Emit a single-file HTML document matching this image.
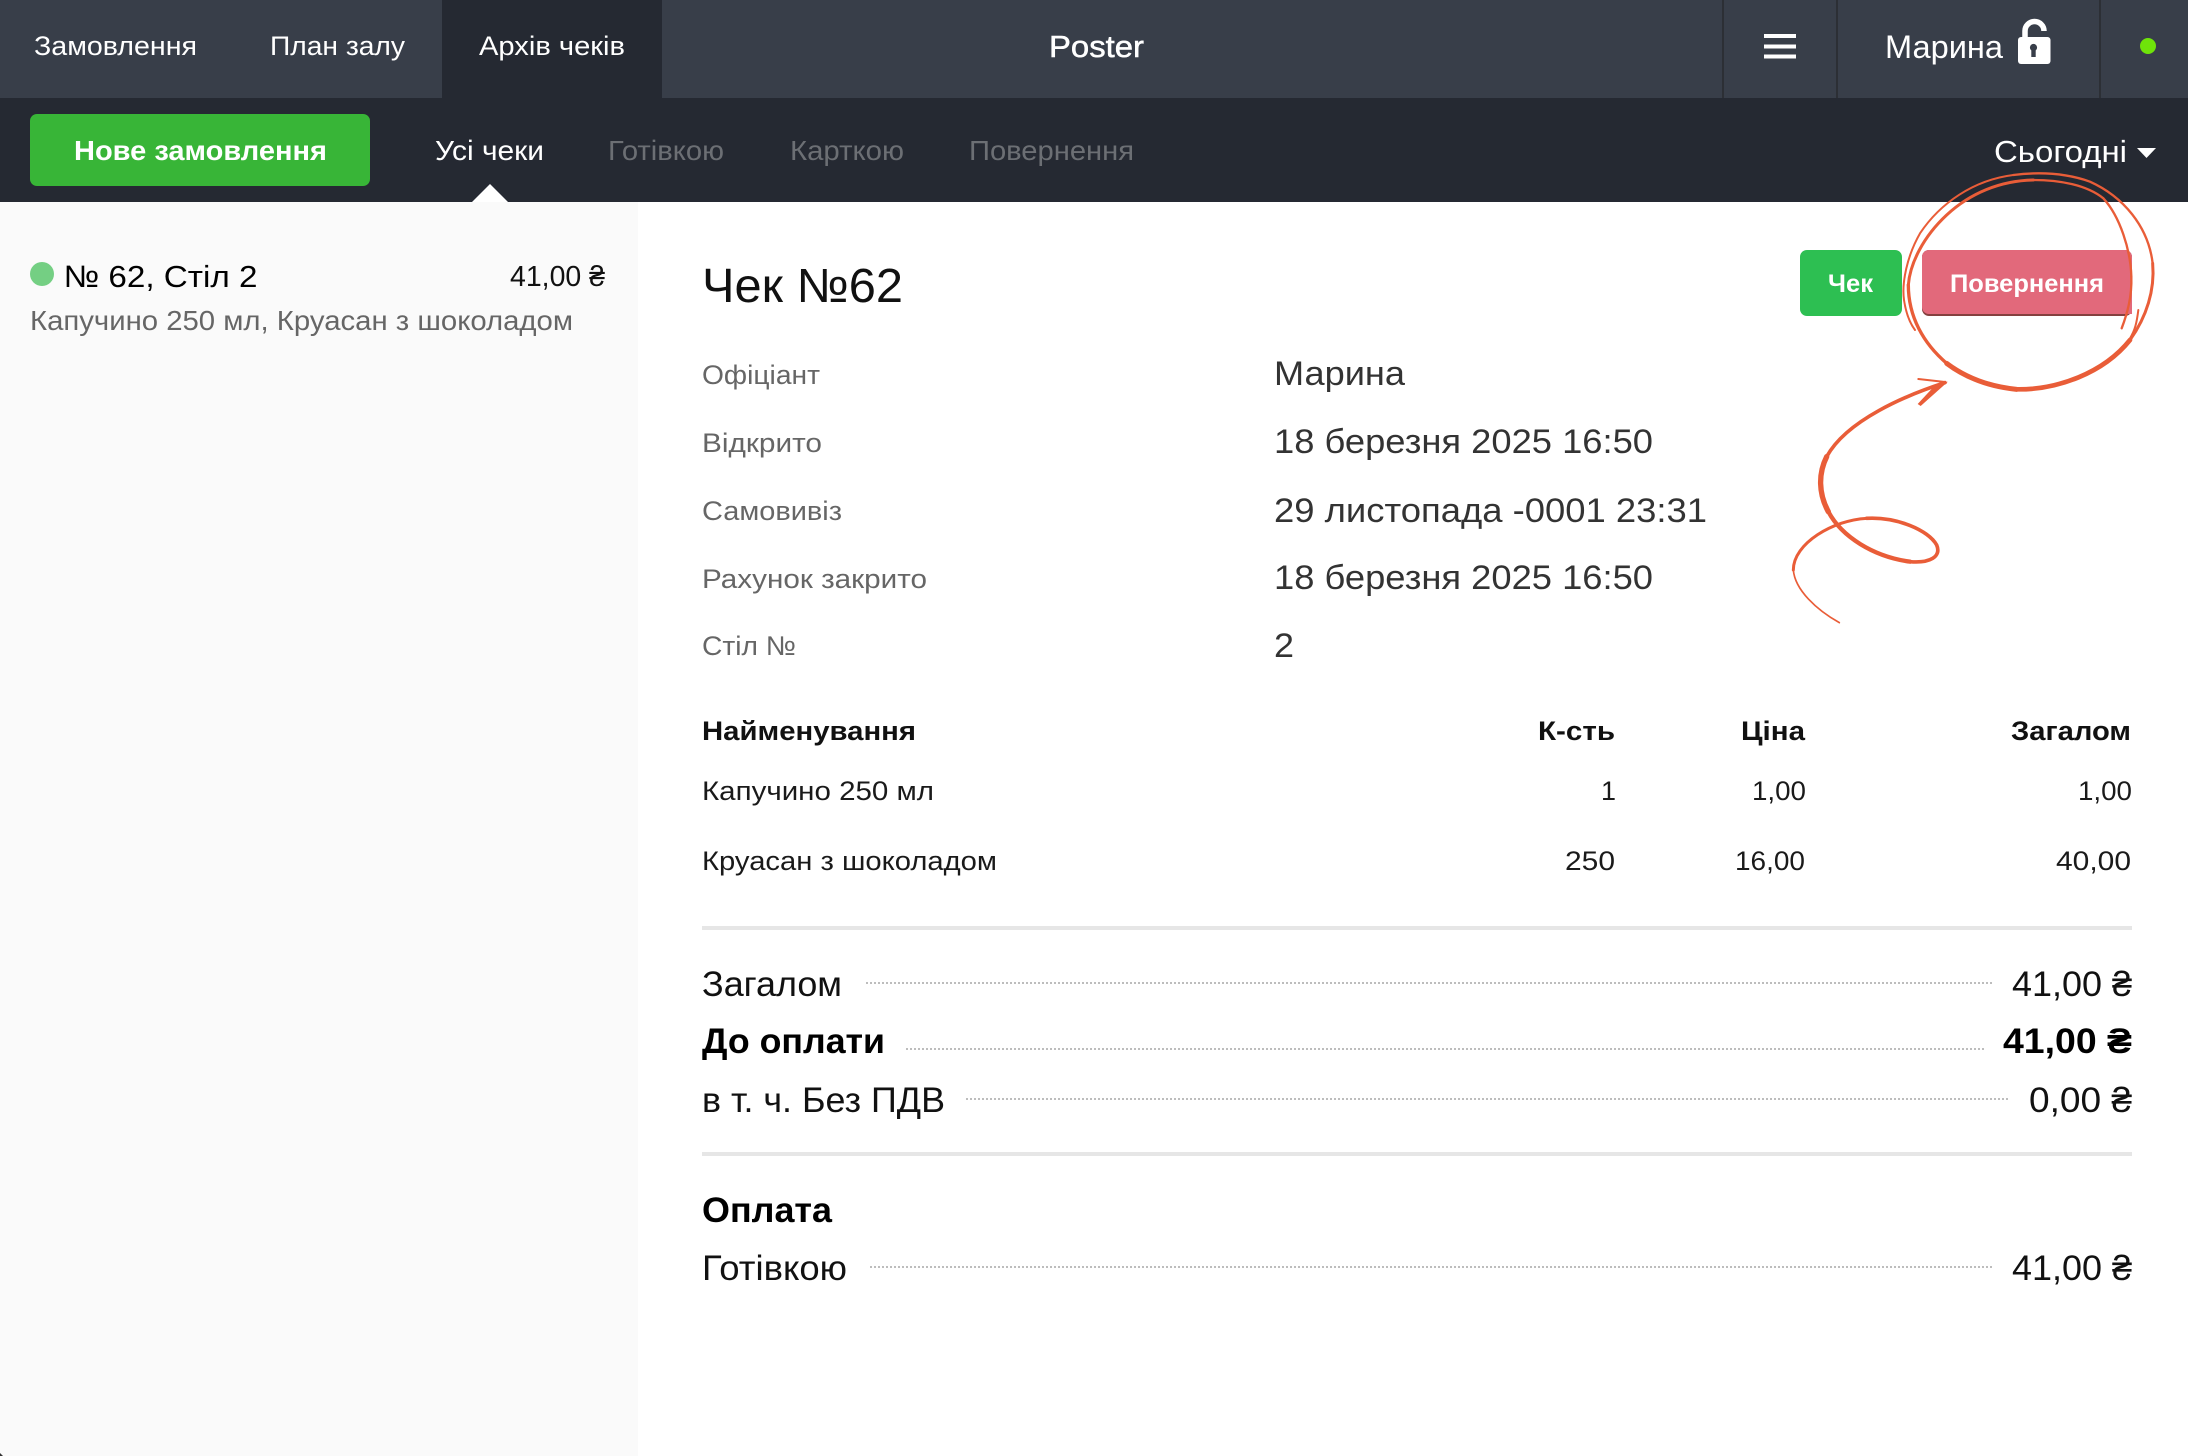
<!DOCTYPE html>
<html lang="uk">
<head>
<meta charset="utf-8">
<title>Poster</title>
<style>
html,body{margin:0;padding:0;background:#fff;width:2188px;height:1456px;overflow:hidden}
svg{display:block;position:absolute;left:0;top:0}
text{font-family:"Liberation Sans","DejaVu Sans",sans-serif;white-space:pre}
.w{fill:#fff}
.tab{font-size:27px}
.sub{font-size:28px}
.mute{fill:#6c6f74}
.lab{font-size:27px;fill:#666}
.val{font-size:34.5px;fill:#333}
.th{font-size:27px;font-weight:bold;fill:#111}
.td{font-size:27px;fill:#1a1a1a}
.tot{font-size:35px;fill:#111}
.b{font-weight:bold;fill:#000}
.dot{stroke:#bdbdbd;stroke-width:2;stroke-dasharray:2 2}
.red{fill:none;stroke:#e95d38;stroke-linecap:round;stroke-linejoin:round}
</style>
</head>
<body>
<svg width="2188" height="1456" viewBox="0 0 2188 1456" xmlns="http://www.w3.org/2000/svg">
  <!-- bars -->
  <rect x="0" y="0" width="2188" height="98" fill="#383e49"/>
  <rect x="0" y="98" width="2188" height="104" fill="#252932"/>
  <rect x="442" y="0" width="220" height="98" fill="#252932"/>
  <rect x="1722" y="0" width="2" height="98" fill="#2c2f35"/>
  <rect x="1836" y="0" width="2" height="98" fill="#2c2f35"/>
  <rect x="2099" y="0" width="2" height="98" fill="#2c2f35"/>
  <!-- left panel -->
  <rect x="0" y="202" width="638" height="1254" fill="#fafafa"/>
  <path d="M472 202L490 184L508 202Z" fill="#fff"/>

  <!-- top nav -->
  <text class="w tab" x="34" y="55" textLength="163" lengthAdjust="spacingAndGlyphs">Замовлення</text>
  <text class="w tab" x="270" y="55" textLength="135" lengthAdjust="spacingAndGlyphs">План залу</text>
  <text class="w tab" x="479" y="55" textLength="146" lengthAdjust="spacingAndGlyphs">Архів чеків</text>
  <text class="w" x="1049" y="57" font-size="31" stroke="#fff" stroke-width=".5" textLength="95" lengthAdjust="spacingAndGlyphs">Poster</text>
  <rect x="1764" y="34" width="32" height="4" fill="#fff"/>
  <rect x="1764" y="44.5" width="32" height="4" fill="#fff"/>
  <rect x="1764" y="54.5" width="32" height="4" fill="#fff"/>
  <text class="w" x="1885" y="58" font-size="32" textLength="118" lengthAdjust="spacingAndGlyphs">Марина</text>
  <!-- lock -->
  <path d="M2025 38V31A9.5 9.5 0 0 1 2044 31" fill="none" stroke="#fff" stroke-width="5.5"/>
  <rect x="2018" y="37" width="32.5" height="27" rx="3" fill="#fff"/>
  <circle cx="2033.5" cy="47.5" r="3.6" fill="#383e49"/>
  <rect x="2031.3" y="48" width="4.4" height="9" fill="#383e49"/>
  <circle cx="2148" cy="46" r="8" fill="#6fe30a"/>

  <!-- sub nav -->
  <rect x="30" y="114" width="340" height="72" rx="7" fill="#38b537"/>
  <text class="w" x="74" y="160" font-size="28" font-weight="bold" textLength="253" lengthAdjust="spacingAndGlyphs">Нове замовлення</text>
  <text class="w sub" x="435" y="160" textLength="109" lengthAdjust="spacingAndGlyphs">Усі чеки</text>
  <text class="sub mute" x="608" y="160" textLength="116" lengthAdjust="spacingAndGlyphs">Готівкою</text>
  <text class="sub mute" x="790" y="160" textLength="114" lengthAdjust="spacingAndGlyphs">Карткою</text>
  <text class="sub mute" x="969" y="160" textLength="165" lengthAdjust="spacingAndGlyphs">Повернення</text>
  <text class="w" x="1994" y="162" font-size="31" textLength="133" lengthAdjust="spacingAndGlyphs">Сьогодні</text>
  <path d="M2137 148H2156L2146.5 158Z" fill="#fff"/>

  <!-- list item -->
  <circle cx="42" cy="274" r="12" fill="#74cf83"/>
  <text x="63.5" y="287" font-size="31" fill="#000" textLength="194" lengthAdjust="spacingAndGlyphs">№ 62, Стіл 2</text>
  <text x="510" y="286" font-size="29" fill="#111" textLength="95" lengthAdjust="spacingAndGlyphs">41,00 ₴</text>
  <text x="30" y="330" font-size="28" fill="#666" textLength="543" lengthAdjust="spacingAndGlyphs">Капучино 250 мл, Круасан з шоколадом</text>

  <!-- heading -->
  <text x="702" y="302" font-size="48" fill="#111" textLength="201" lengthAdjust="spacingAndGlyphs">Чек №62</text>
  <rect x="1800" y="250" width="102" height="66" rx="7" fill="#2dbf52"/>
  <text class="w" x="1828" y="292" font-size="25" font-weight="bold" textLength="45" lengthAdjust="spacingAndGlyphs">Чек</text>
  <rect x="1922" y="250" width="210" height="66" rx="7" fill="#85403f"/>
  <path d="M1929 250H2125A7 7 0 0 1 2132 257V314H1929A7 7 0 0 1 1922 307V257A7 7 0 0 1 1929 250Z" fill="#e2697b"/>
  <text class="w" x="1950" y="292" font-size="25" font-weight="bold" textLength="154" lengthAdjust="spacingAndGlyphs">Повернення</text>

  <!-- details -->
  <text class="lab" x="702" y="384" textLength="118" lengthAdjust="spacingAndGlyphs">Офіціант</text>
  <text class="lab" x="702" y="452" textLength="120" lengthAdjust="spacingAndGlyphs">Відкрито</text>
  <text class="lab" x="702" y="520" textLength="140" lengthAdjust="spacingAndGlyphs">Самовивіз</text>
  <text class="lab" x="702" y="588" textLength="225" lengthAdjust="spacingAndGlyphs">Рахунок закрито</text>
  <text class="lab" x="702" y="655" textLength="94" lengthAdjust="spacingAndGlyphs">Стіл №</text>
  <text class="val" x="1274" y="385" textLength="131" lengthAdjust="spacingAndGlyphs">Марина</text>
  <text class="val" x="1274" y="453" textLength="379" lengthAdjust="spacingAndGlyphs">18 березня 2025 16:50</text>
  <text class="val" x="1274" y="522" textLength="433" lengthAdjust="spacingAndGlyphs">29 листопада -0001 23:31</text>
  <text class="val" x="1274" y="589" textLength="379" lengthAdjust="spacingAndGlyphs">18 березня 2025 16:50</text>
  <text class="val" x="1274" y="657" textLength="20" lengthAdjust="spacingAndGlyphs">2</text>

  <!-- table -->
  <text class="th" x="702" y="740" textLength="214" lengthAdjust="spacingAndGlyphs">Найменування</text>
  <text class="th" x="1538" y="740" textLength="77" lengthAdjust="spacingAndGlyphs">К-сть</text>
  <text class="th" x="1741" y="740" textLength="64" lengthAdjust="spacingAndGlyphs">Ціна</text>
  <text class="th" x="2011" y="740" textLength="120" lengthAdjust="spacingAndGlyphs">Загалом</text>
  <text class="td" x="702" y="800" textLength="232" lengthAdjust="spacingAndGlyphs">Капучино 250 мл</text>
  <text class="td" x="1601" y="800" textLength="15" lengthAdjust="spacingAndGlyphs">1</text>
  <text class="td" x="1752" y="800" textLength="54" lengthAdjust="spacingAndGlyphs">1,00</text>
  <text class="td" x="2078" y="800" textLength="54" lengthAdjust="spacingAndGlyphs">1,00</text>
  <text class="td" x="702" y="870" textLength="295" lengthAdjust="spacingAndGlyphs">Круасан з шоколадом</text>
  <text class="td" x="1565" y="870" textLength="50" lengthAdjust="spacingAndGlyphs">250</text>
  <text class="td" x="1735" y="870" textLength="70" lengthAdjust="spacingAndGlyphs">16,00</text>
  <text class="td" x="2056" y="870" textLength="75" lengthAdjust="spacingAndGlyphs">40,00</text>

  <rect x="702" y="926" width="1430" height="4" fill="#e6e6e6"/>

  <!-- totals -->
  <text class="tot" x="702" y="996" textLength="140" lengthAdjust="spacingAndGlyphs">Загалом</text>
  <line class="dot" x1="866" y1="983" x2="1992" y2="983"/>
  <text class="tot" x="2012" y="996" textLength="120" lengthAdjust="spacingAndGlyphs">41,00 ₴</text>

  <text class="tot b" x="702" y="1053" textLength="183" lengthAdjust="spacingAndGlyphs">До оплати</text>
  <line class="dot" x1="906" y1="1049" x2="1984" y2="1049"/>
  <text class="tot b" x="2003" y="1053" textLength="129" lengthAdjust="spacingAndGlyphs">41,00 ₴</text>

  <text class="tot" x="702" y="1112" textLength="243" lengthAdjust="spacingAndGlyphs">в т. ч. Без ПДВ</text>
  <line class="dot" x1="966" y1="1099" x2="2008" y2="1099"/>
  <text class="tot" x="2029" y="1112" textLength="103" lengthAdjust="spacingAndGlyphs">0,00 ₴</text>

  <rect x="702" y="1152" width="1430" height="4" fill="#e6e6e6"/>

  <text class="tot b" x="702" y="1222" textLength="130" lengthAdjust="spacingAndGlyphs">Оплата</text>
  <text class="tot" x="702" y="1280" textLength="145" lengthAdjust="spacingAndGlyphs">Готівкою</text>
  <line class="dot" x1="870" y1="1267" x2="1992" y2="1267"/>
  <text class="tot" x="2012" y="1280" textLength="120" lengthAdjust="spacingAndGlyphs">41,00 ₴</text>

  <!-- hand-drawn circle -->
  <g transform="translate(1890 160) scale(.33333)" class="red">
    <path stroke-width="7" d="M695 505C712 460 726 410 724 350"/>
    <path stroke-width="7" d="M724 350C722 270 690 170 640 115C590 75 510 60 430 60"/>
    <path stroke-width="9" d="M430 60C330 62 240 100 170 165C100 230 60 310 55 375"/>
    <path stroke-width="10" d="M55 375C55 470 100 550 170 610"/>
    <path stroke-width="15" d="M170 610C230 655 300 680 380 688"/>
    <path stroke-width="14" d="M380 688C500 690 640 640 720 540"/>
    <path stroke-width="9" d="M720 540C770 470 795 390 788 310"/>
    <path stroke-width="7" d="M788 310C775 200 700 110 600 65C530 40 450 35 370 45"/>
    <path stroke-width="6" d="M370 45C250 60 150 130 90 220C50 290 35 370 42 420C48 460 60 490 75 510"/>
    <path stroke-width="6" d="M745 450C740 490 735 510 720 535"/>
  </g>

  <!-- hand-drawn arrow -->
  <g transform="translate(1750 360) scale(.33333)" class="red">
    <path stroke-width="11" d="M585 68C470 105 290 180 230 290"/>
    <path stroke-width="16" d="M230 290C205 340 205 400 235 455"/>
    <path stroke-width="13" d="M235 455C275 530 370 590 480 605"/>
    <path stroke-width="11" d="M480 605C540 610 575 590 560 555C535 510 440 470 350 475"/>
    <path stroke-width="9" d="M350 475C250 480 130 550 130 630"/>
    <path stroke-width="5" d="M130 630C135 690 200 750 268 788"/>
    <path stroke-width="6" d="M505 57L585 66"/>
    <path stroke="none" fill="#e95d38" d="M594 65L512 138L503 132L555 76Z"/>
  </g>

  <path d="M0 1456V1453L3 1456Z" fill="#333"/>
</svg>
</body>
</html>
